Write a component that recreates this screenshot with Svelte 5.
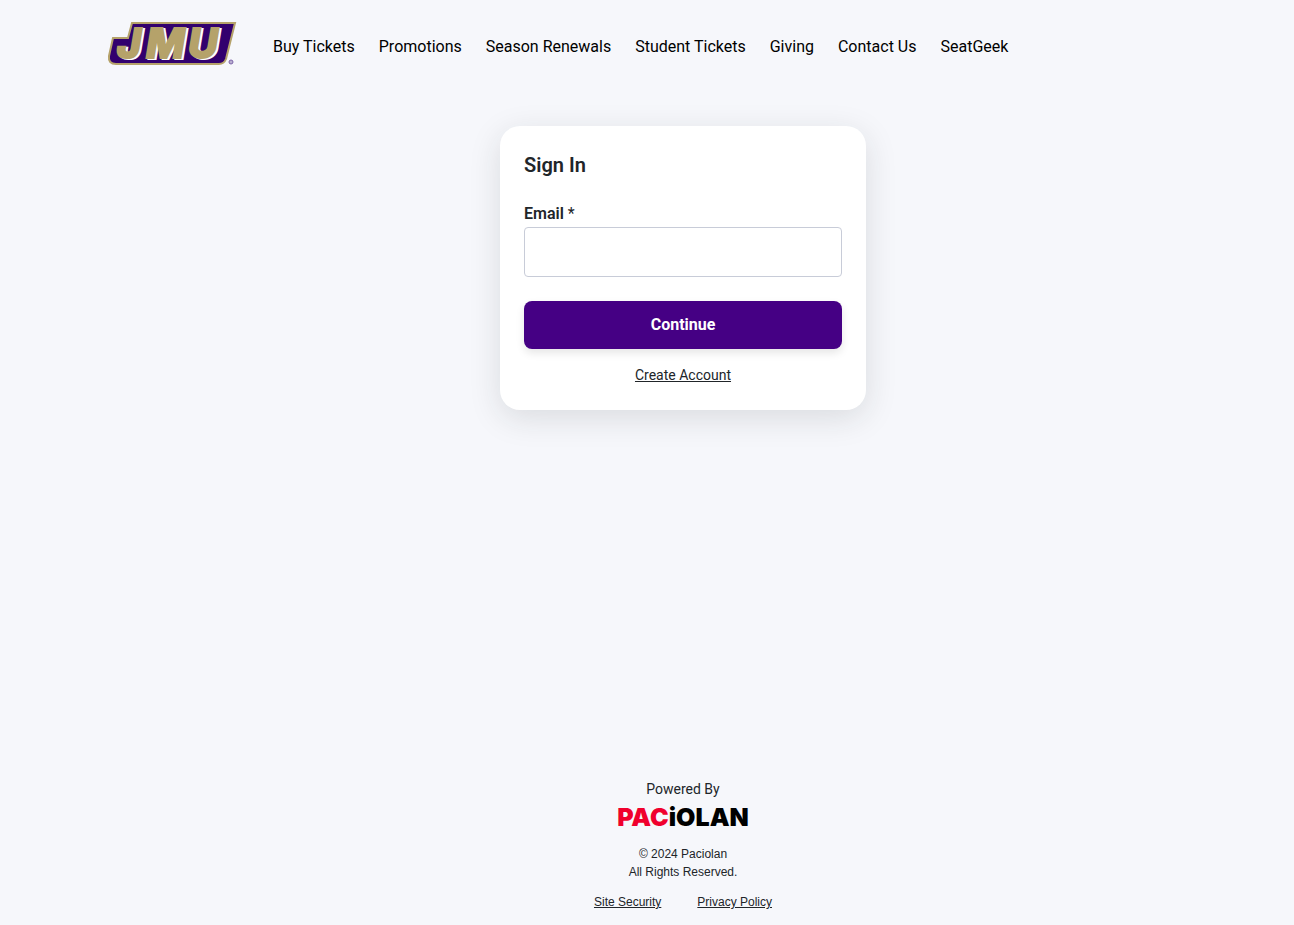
<script>
  let email = '';

  const navLinks = [
    'Buy Tickets',
    'Promotions',
    'Season Renewals',
    'Student Tickets',
    'Giving',
    'Contact Us',
    'SeatGeek',
  ];

  function handleSubmit() {
    console.log('continue', email);
  }
</script>

<div class="page">
  <header>
    <a class="logo" href="/" aria-label="JMU home">
      <svg width="130" height="46" viewBox="0 0 130 46">
        <path
          d="M25 2 H128 L119 38 Q117 43 112 43 H9 Q1 43 2 35 L6 17 H21 Z"
          fill="#32006e" stroke="#b5a26a" stroke-width="2" />
        <g class="letters">
          <text x="12 41 83" y="38" fill="#fff" stroke="#fff">JMU</text>
          <text x="10 39 81" y="37" fill="#b5a26a" stroke="#b5a26a">JMU</text>
        </g>
        <circle cx="124" cy="41" r="2" fill="#b9aed0" stroke="#7d65a8" />
      </svg>
    </a>
    <nav>
      {#each navLinks as link}
        <a href="/">{link}</a>
      {/each}
    </nav>
  </header>

  <main>
    <form class="card" on:submit|preventDefault={handleSubmit}>
      <h1>Sign In</h1>
      <label for="email">Email <span>*</span></label>
      <input type="email" id="email" bind:value={email} required />
      <button type="submit">Continue</button>
      <a class="create" href="/">Create Account</a>
    </form>
  </main>

  <footer>
    <p class="powered">Powered By</p>
    <p class="paciolan"><span>PAC</span>iOLAN</p>
    <p>© 2024 Paciolan<br />All Rights Reserved.</p>
    <div class="legal">
      <a href="/">Site Security</a>
      <a href="/">Privacy Policy</a>
    </div>
  </footer>
</div>

<style>
  :global(body) {
    background: #f6f7fb;
  }

  .page {
    box-sizing: border-box;
    min-height: 100vh;
    padding-left: 72px;
    display: flex;
    flex-direction: column;
    font-family: Roboto, sans-serif;
    color: #212529;
  }

  a {
    color: inherit;
  }

  header {
    display: flex;
    align-items: center;
    padding: 21px 35px;
    gap: 36px;
  }

  .logo svg {
    display: block;
    overflow: visible;
  }

  .letters {
    font: italic 800 41px Inter, sans-serif;
    stroke-width: 2px;
  }

  nav {
    display: flex;
    flex-wrap: wrap;
    gap: 24px;
    padding-top: 6px;
    font-size: 16px;
    line-height: 24px;
    color: #000;
  }

  nav a {
    text-decoration: none;
  }

  main {
    flex: 1;
    display: flex;
    align-items: flex-start;
    justify-content: center;
    padding: 38px 24px;
  }

  .card {
    box-sizing: border-box;
    width: 100%;
    max-width: 366px;
    padding: 24px;
    display: flex;
    flex-direction: column;
    background: #fff;
    border-radius: 20px;
    box-shadow: 0 8px 32px rgba(33, 37, 41, 0.13);
  }

  h1 {
    margin: 0 0 22px;
    font-size: 20px;
    line-height: 30px;
    font-weight: 600;
  }

  label {
    font-size: 16px;
    line-height: 24px;
    margin-bottom: 1px;
    font-weight: 600;
  }

  label span {
    font-weight: 400;
  }

  input {
    box-sizing: border-box;
    height: 50px;
    padding: 12px;
    border: 1px solid #c8ccd8;
    border-radius: 4px;
    font: inherit;
  }

  button {
    height: 48px;
    margin: 24px 0 16px;
    padding-bottom: 3px;
    border: none;
    border-radius: 8px;
    background: #450084;
    color: #fff;
    font: bold 16px Roboto, sans-serif;
    box-shadow: 0 4px 8px rgba(0, 0, 0, 0.1);
    cursor: pointer;
  }

  .create {
    align-self: center;
    font-size: 14px;
    line-height: 21px;
  }

  footer {
    display: flex;
    flex-direction: column;
    align-items: center;
    padding-bottom: 14px;
    font: 12px/18px 'Liberation Sans', Arial, sans-serif;
    text-align: center;
  }

  footer p {
    margin: 0 0 12px;
  }

  footer .powered {
    margin: 0;
    font: 14px/21px Roboto, sans-serif;
  }

  footer .paciolan {
    margin: 0 0 10px;
    font: 900 25px/35px Inter, sans-serif;
    color: #000;
  }

  .paciolan span {
    color: #f0002d;
  }

  .legal {
    display: flex;
    gap: 36px;
  }
</style>
